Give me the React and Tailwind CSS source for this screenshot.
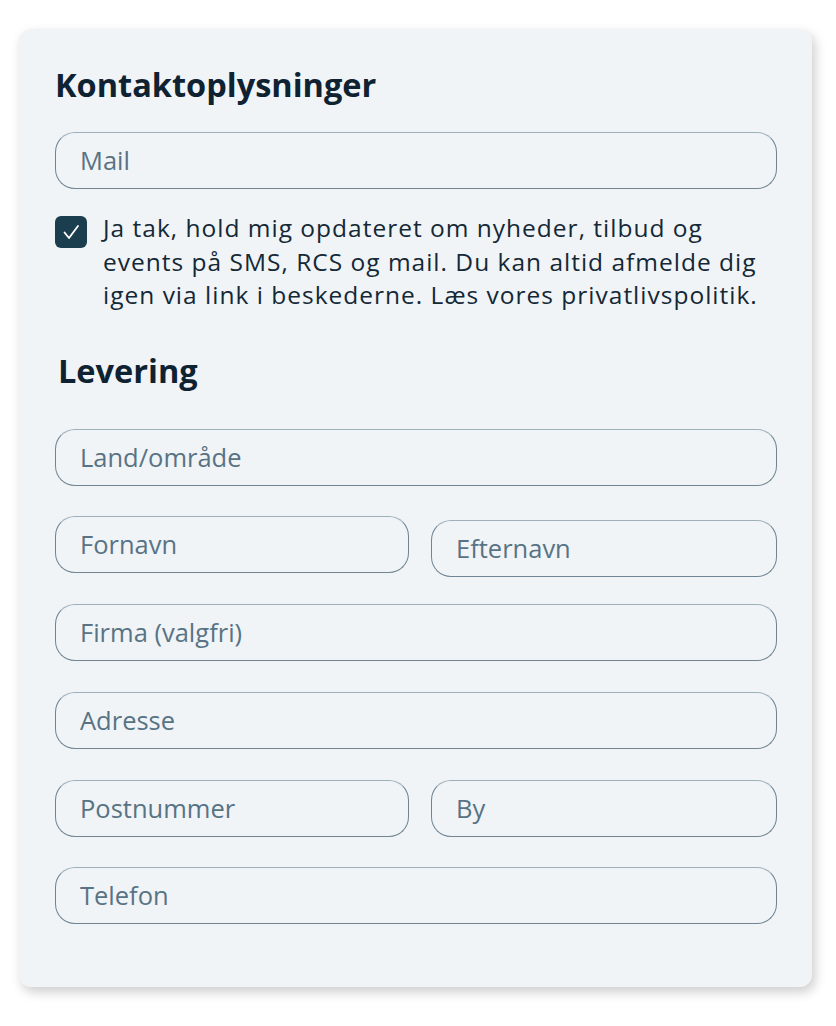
import React from "react";

function Field({ label, className = "" }) {
  return (
    <div
      className={`h-[57px] rounded-[20px] border border-[#6f8593] border-t-[#9fb0bb] flex items-center pl-[24px] text-[25.5px] text-[#587384] ${className}`}
    >
      {label}
    </div>
  );
}

export default function App() {
  return (
    <div className="w-[836px] h-[1026px] bg-white pt-[29px] pl-[19px]" style={{ fontFamily: "'Open Sans', 'Noto Sans', sans-serif" }}>
      <div className="w-[793px] h-[958px] bg-[#f0f4f7] rounded-[12px] shadow-[3px_5px_12px_rgba(0,0,0,0.2)] pl-[36px] pr-[35px] pt-[34px]">
        <h2 className="text-[32.5px] font-bold text-[#0f2231] leading-[44px]">Kontaktoplysninger</h2>
        <Field label="Mail" className="mt-[25px]" />
        <div className="flex mt-[26px] gap-[16px]">
          <div className="w-[32px] h-[32px] shrink-0 rounded-[6px] bg-[#1b3e4e] mt-[1px]">
            <svg width="32" height="32" viewBox="0 0 32 32" fill="none" className="block">
              <path d="M9.5 16.5 L14 22 L23 10" stroke="white" strokeWidth="1.8" strokeLinecap="round" strokeLinejoin="round" />
            </svg>
          </div>
          <p className="text-[24.5px] leading-[33.5px] tracking-[1px] text-[#142836] -mt-[4px] whitespace-nowrap">
            Ja tak, hold mig opdateret om nyheder, tilbud og<br />
            events på SMS, RCS og mail. Du kan altid afmelde dig<br />
            igen via link i beskederne. Læs vores privatlivspolitik.
          </p>
        </div>
        <h2 className="text-[32.5px] font-bold text-[#0f2231] leading-[44px] mt-[37px] ml-[3px]">Levering</h2>
        <Field label="Land/område" className="mt-[36px]" />
        <div className="grid grid-cols-[354px_1fr] gap-[22px] mt-[30px] items-start">
          <Field label="Fornavn" />
          <Field label="Efternavn" className="mt-[4px]" />
        </div>
        <Field label="Firma (valgfri)" className="mt-[27px]" />
        <Field label="Adresse" className="mt-[31px]" />
        <div className="grid grid-cols-[354px_1fr] gap-[22px] mt-[31px]">
          <Field label="Postnummer" />
          <Field label="By" />
        </div>
        <Field label="Telefon" className="mt-[30px]" />
      </div>
    </div>
  );
}
